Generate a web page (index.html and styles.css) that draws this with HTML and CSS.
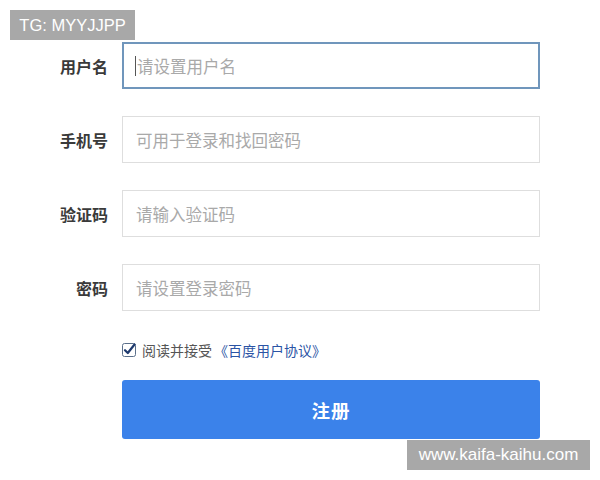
FILE: index.html
```html
<!DOCTYPE html>
<html lang="zh-CN">
<head>
<meta charset="utf-8">
<link rel="stylesheet" href="styles.css">
</head>
<body>
<div class="page">
  <form class="form">
    <div class="row">
      <label class="label">用户名</label>
      <div class="field field-focus"><span class="caret"></span><span class="ph">请设置用户名</span></div>
    </div>
    <div class="row">
      <label class="label">手机号</label>
      <div class="field"><span class="ph">可用于登录和找回密码</span></div>
    </div>
    <div class="row">
      <label class="label">验证码</label>
      <div class="field"><span class="ph">请输入验证码</span></div>
    </div>
    <div class="row">
      <label class="label">密码</label>
      <div class="field"><span class="ph">请设置登录密码</span></div>
    </div>
    <div class="agree">
      <span class="check">
        <svg width="14" height="14" viewBox="0 0 14 14">
          <rect x="0.5" y="0.5" width="13" height="13" rx="2" fill="#fff" stroke="#5a6f8a"/>
          <path d="M3 7.2 L5.8 10 L12.5 1.5" fill="none" stroke="#1e3a6e" stroke-width="2.2" stroke-linecap="round" stroke-linejoin="round"/>
        </svg>
      </span>
      <span class="agree-text">阅读并接受</span>
      <a class="agree-link">《百度用户协议》</a>
    </div>
    <button type="button" class="submit">注册</button>
  </form>
  <div class="wm wm-tl">TG: MYYJJPP</div>
  <div class="wm wm-br">www.kaifa-kaihu.com</div>
</div>
</body>
</html>
```
FILE: styles.css
```css
html, body {
  margin: 0;
  padding: 0;
  background: #fff;
}
body {
  font-family: "Noto Sans CJK SC", "Liberation Sans", sans-serif;
}
.page {
  position: relative;
  width: 600px;
  height: 480px;
  overflow: hidden;
}
.form {
  display: flex;
  flex-direction: column;
  padding-top: 42px;
}
.row {
  display: flex;
  align-items: center;
  gap: 14px;
  margin-bottom: 27px;
}
.label {
  width: 108px;
  text-align: right;
  font-size: 16px;
  font-weight: 700;
  color: #3a3a3a;
}
.field {
  box-sizing: border-box;
  width: 418px;
  height: 47px;
  border: 1px solid #dedede;
  display: flex;
  align-items: center;
  padding-left: 13px;
  background: #fff;
}
.field-focus {
  border: 2px solid #7096bc;
  padding-left: 11px;
}
.caret {
  width: 1px;
  height: 20px;
  background: #555;
  margin-right: 1px;
}
.ph {
  font-size: 16.5px;
  color: #a9a9a9;
}
.agree {
  display: flex;
  align-items: center;
  margin-left: 122px;
  margin-top: 4px;
  height: 16px;
  font-size: 14px;
}
.check {
  display: flex;
  margin-right: 6px;
}
.agree-text {
  color: #555;
}
.agree-link {
  color: #2b54a5;
  margin-left: 2px;
}
.submit {
  margin-left: 122px;
  margin-top: 22px;
  width: 418px;
  height: 59px;
  border: none;
  border-radius: 3px;
  background: #3b82ea;
  color: #fff;
  font-family: "Noto Sans CJK SC", sans-serif;
  font-size: 18.5px;
  font-weight: 700;
  letter-spacing: 1px;
}
.wm {
  position: absolute;
  background: #a8a8a8;
  color: #fff;
  font-family: "Liberation Sans", sans-serif;
  display: flex;
  align-items: center;
  justify-content: center;
}
.wm-tl {
  left: 10px;
  top: 10px;
  width: 125px;
  height: 30px;
  font-size: 16.5px;
}
.wm-br {
  left: 407px;
  top: 440px;
  width: 183px;
  height: 30px;
  font-size: 17px;
}
```
